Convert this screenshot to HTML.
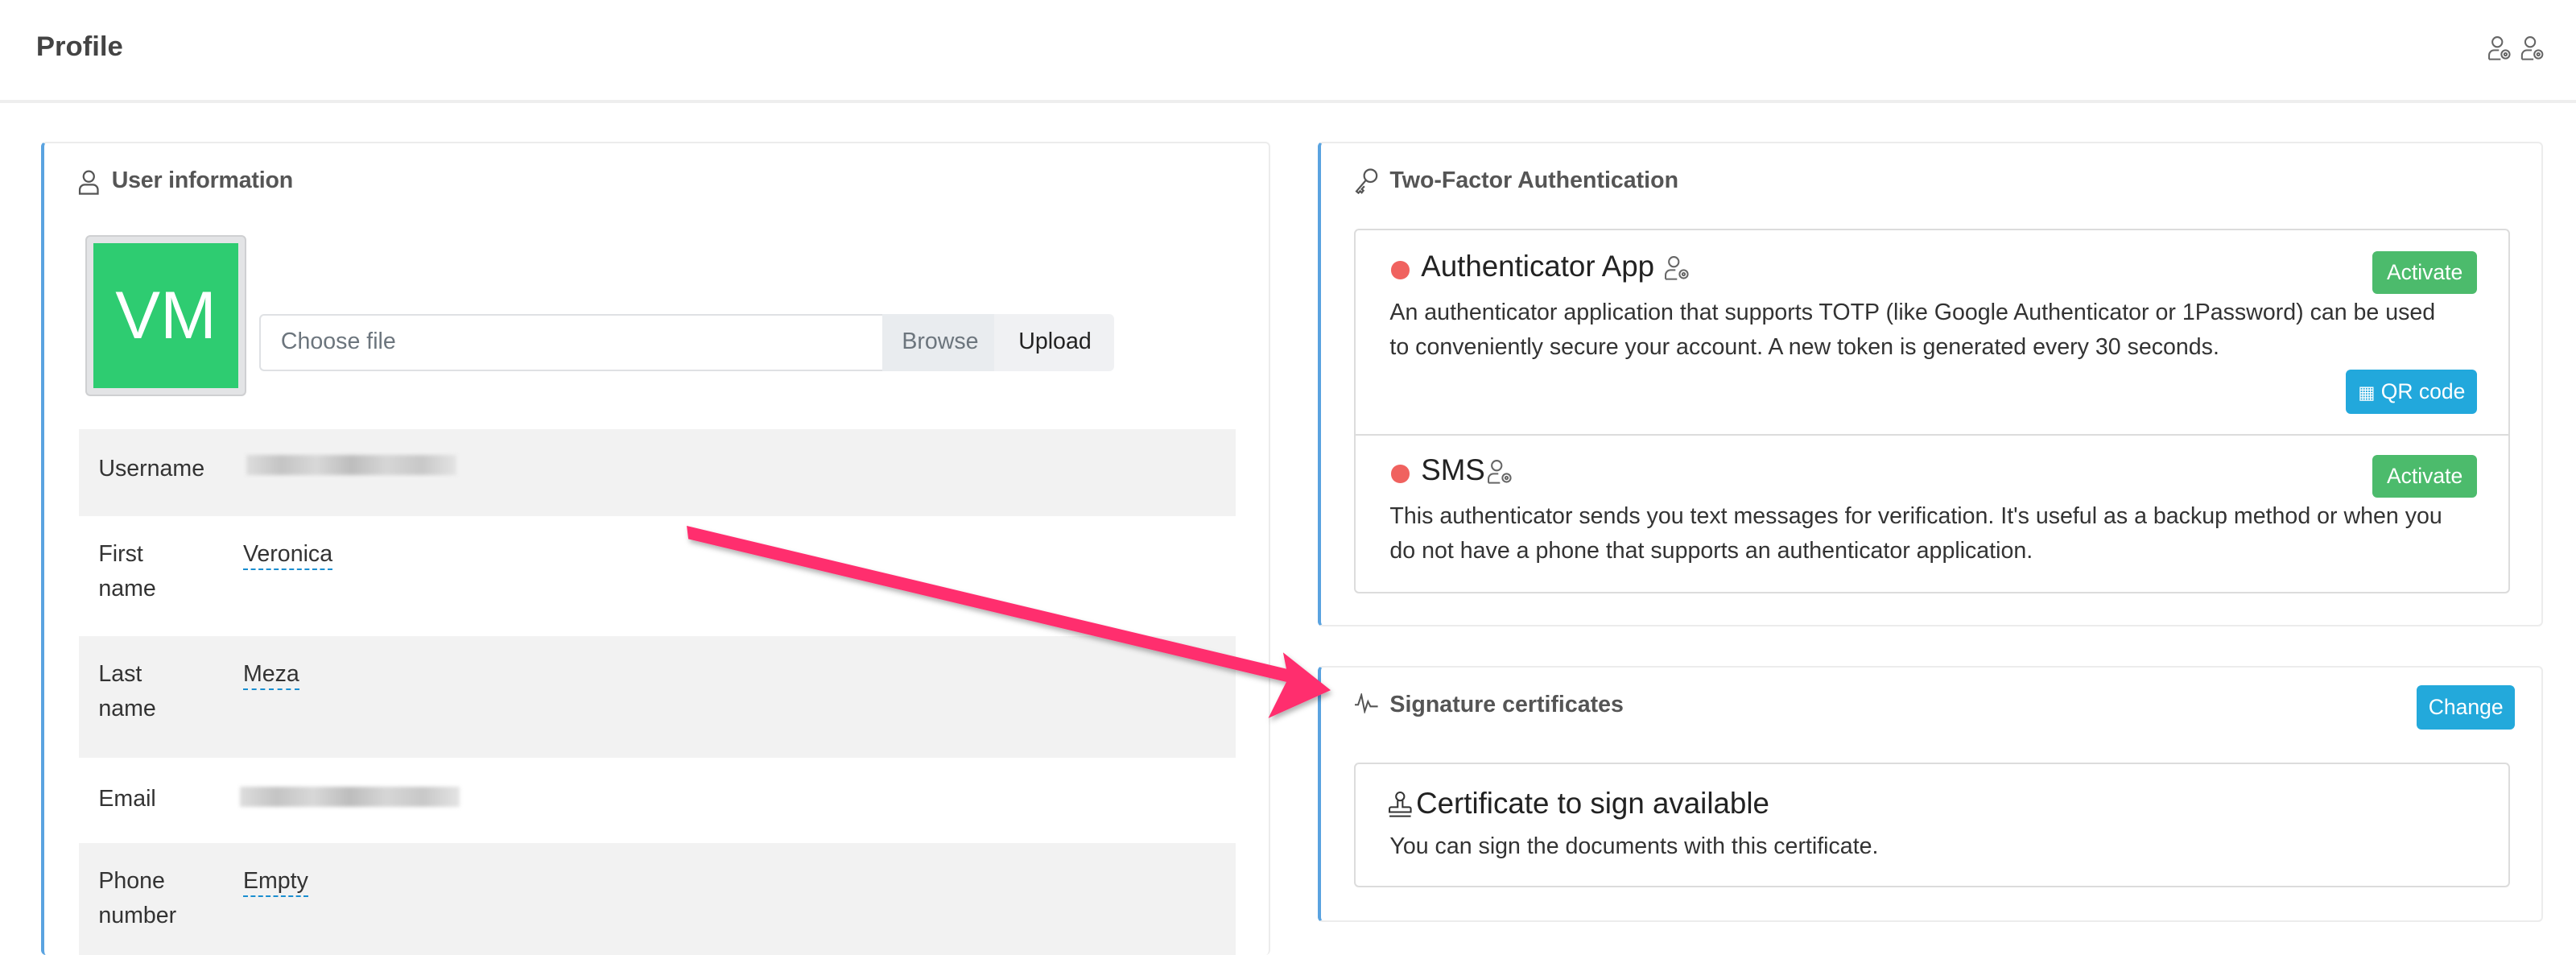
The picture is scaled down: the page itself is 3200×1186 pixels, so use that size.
<!DOCTYPE html>
<html><head><meta charset="utf-8"><style>
html,body{margin:0;padding:0;background:#fff;overflow:hidden;width:3200px;height:1186px}
#w{zoom:2.0408;width:1568px;height:581px;position:relative;font-family:"Liberation Sans",sans-serif;color:#333;overflow:hidden}
.a{position:absolute}
.t{white-space:nowrap}
.card{position:absolute;border:1px solid #ececec;border-left:2px solid #5aa3e0;border-radius:3px;background:#fff;box-sizing:border-box}
.btn{position:absolute;color:#fff;font-size:13px;border-radius:3px;text-align:center}
.lbl{position:absolute;left:12px;font-size:14px;line-height:21px;color:#333}
.val{position:absolute;left:100px;font-size:14px;color:#333;border-bottom:1px dashed #1a8ed0;line-height:17px}
.blur{position:absolute;height:12px;background:linear-gradient(90deg,#ddd,#c4c4c4,#d8d8d8,#bdbdbd,#d6d6d6,#c8c8c8,#e4e4e4);filter:blur(1.2px)}
</style></head><body><div id="w">
<div class="a" style="left:0;top:0;width:1568px;height:61px;background:#fff;border-bottom:2px solid #eee"></div>
<div class="a t" style="left:22px;top:19px;font-size:17px;font-weight:bold;color:#444">Profile</div>
<svg class="a" style="left:1514px;top:21px" width="40" height="18" viewBox="0 0 40 18" fill="none" stroke="#666" stroke-width="1">
<circle cx="6" cy="4.5" r="3"/><path d="M1 15v-2.5a3 3 0 0 1 3-3h3M1 15h7"/><circle cx="11" cy="12" r="2.5"/><circle cx="11" cy="12" r="0.8"/>
<circle cx="26" cy="4.5" r="3"/><path d="M21 15v-2.5a3 3 0 0 1 3-3h3M21 15h7"/><circle cx="31" cy="12" r="2.5"/><circle cx="31" cy="12" r="0.8"/></svg>

<div class="card" style="left:25px;top:86px;width:748px;height:495px;border-bottom:none;overflow:hidden">
<svg class="a" style="left:20px;top:16px" width="14" height="16" viewBox="0 0 14 16" fill="none" stroke="#555" stroke-width="1.1"><circle cx="7" cy="4.5" r="3.2"/><path d="M1.5 15v-2.5a3 3 0 0 1 3-3h5a3 3 0 0 1 3 3V15z"/></svg>
<div class="a t" style="left:41px;top:15px;font-size:14px;color:#555;font-weight:bold;letter-spacing:-0.1px">User information</div>
<div class="a" style="left:25px;top:56px;width:96px;height:96px;background:#e3e4e6;border:1px solid #cfd0d2;border-radius:3px"></div>
<div class="a" style="left:30px;top:61px;width:88px;height:88px;background:#2ecc71;color:#fff;font-size:41px;text-align:center;line-height:88px">VM</div>
<div class="a" style="left:131px;top:104px;width:378px;height:33px;border:1px solid #dfe1e4;border-radius:3px 0 0 3px;background:#fff"></div>
<div class="a t" style="left:144px;top:113px;font-size:14px;color:#6c757d">Choose file</div>
<div class="a" style="left:510px;top:104px;width:68px;height:35px;background:#e9ecef"></div>
<div class="a t" style="left:522px;top:113px;font-size:14px;color:#6c757d">Browse</div>
<div class="a" style="left:578px;top:104px;width:73px;height:35px;background:#f0f1f3;border-radius:0 3px 3px 0"></div>
<div class="a t" style="left:593px;top:113px;font-size:14px;color:#222">Upload</div>
<div class="a" style="left:21px;top:174px;width:704px;height:53px;background:#f2f2f2"><div class="lbl" style="top:14px">Username</div><div class="blur" style="left:102px;top:16px;width:128px"></div></div>
<div class="a" style="left:21px;top:227px;width:704px;height:73px;background:#fff"><div class="lbl" style="top:13px">First<br>name</div><div class="val" style="top:15px">Veronica</div></div>
<div class="a" style="left:21px;top:300px;width:704px;height:74px;background:#f2f2f2"><div class="lbl" style="top:13px">Last<br>name</div><div class="val" style="top:15px">Meza</div></div>
<div class="a" style="left:21px;top:374px;width:704px;height:52px;background:#fff"><div class="lbl" style="top:15px">Email</div><div class="blur" style="left:98px;top:18px;width:134px"></div></div>
<div class="a" style="left:21px;top:426px;width:704px;height:69px;background:#f2f2f2"><div class="lbl" style="top:13px">Phone<br>number</div><div class="val" style="top:15px">Empty</div></div>
</div>

<div class="card" style="left:802px;top:86px;width:746px;height:295px">
<svg class="a" style="left:20px;top:15px" width="15" height="16" viewBox="0 0 15 16" fill="none" stroke="#555" stroke-width="1.1"><circle cx="10" cy="5" r="3.8"/><path d="M7.3 7.7L1.5 14.5l1.2 1 1-1.1 1 .9 1-1.2-1-.9 1.6-1.8"/></svg>
<div class="a t" style="left:42px;top:15px;font-size:14px;color:#555;font-weight:bold">Two-Factor Authentication</div>
<div class="a" style="left:20px;top:52px;width:702px;height:220px;border:1px solid #dcdcdc;border-radius:3px"></div>
<div class="a" style="left:21px;top:177px;width:702px;height:1px;background:#dcdcdc"></div>
<div class="a" style="left:43px;top:72px;width:11px;height:11px;border-radius:50%;background:#f0625f"></div>
<div class="a t" style="left:61px;top:65px;font-size:18px;color:#222">Authenticator App</div>
<svg class="a" style="left:209px;top:68px" width="19" height="16" viewBox="0 0 19 16" fill="none" stroke="#666" stroke-width="1"><circle cx="6" cy="4.5" r="3"/><path d="M1 15v-2.5a3 3 0 0 1 3-3h3M1 15h7"/><circle cx="12" cy="12" r="2.5"/><circle cx="12" cy="12" r="0.8"/></svg>
<div class="btn" style="left:640px;top:66px;width:64px;height:26px;line-height:26px;background:#4cbb6c">Activate</div>
<div class="a" style="left:42px;top:93px;font-size:14px;line-height:21px;color:#333;width:640px">An authenticator application that supports TOTP (like Google Authenticator or 1Password) can be used to conveniently secure your account. A new token is generated every 30 seconds.</div>
<div class="btn" style="left:624px;top:138px;width:80px;height:27px;line-height:27px;background:#22a8dc"><span style="font-size:11px">▦</span> QR code</div>
<div class="a" style="left:43px;top:196px;width:11px;height:11px;border-radius:50%;background:#f0625f"></div>
<div class="a t" style="left:61px;top:189px;font-size:18px;color:#222">SMS</div>
<svg class="a" style="left:101px;top:192px" width="19" height="16" viewBox="0 0 19 16" fill="none" stroke="#666" stroke-width="1"><circle cx="6" cy="4.5" r="3"/><path d="M1 15v-2.5a3 3 0 0 1 3-3h3M1 15h7"/><circle cx="12" cy="12" r="2.5"/><circle cx="12" cy="12" r="0.8"/></svg>
<div class="btn" style="left:640px;top:190px;width:64px;height:26px;line-height:26px;background:#4cbb6c">Activate</div>
<div class="a" style="left:42px;top:217px;font-size:14px;line-height:21px;color:#333;width:645px">This authenticator sends you text messages for verification. It's useful as a backup method or when you do not have a phone that supports an authenticator application.</div>
</div>

<div class="card" style="left:802px;top:405px;width:746px;height:156px">
<svg class="a" style="left:20px;top:16px" width="15" height="12" viewBox="0 0 15 12" fill="none" stroke="#555" stroke-width="1"><path d="M0.5 7h2l2-6 2 10 2-6 1.5 3h4.5"/></svg>
<div class="a t" style="left:42px;top:15px;font-size:14px;color:#555;font-weight:bold">Signature certificates</div>
<div class="btn" style="left:667px;top:11px;width:60px;height:27px;line-height:27px;background:#23a9db">Change</div>
<div class="a" style="left:20px;top:58px;width:702px;height:74px;border:1px solid #dcdcdc;border-radius:3px"></div>
<svg class="a" style="left:41px;top:75px" width="15" height="17" viewBox="0 0 15 17" fill="none" stroke="#333" stroke-width="1"><circle cx="7.5" cy="3.5" r="2.5"/><path d="M6 6v4H2a1 1 0 0 0-1 1v2h13v-2a1 1 0 0 0-1-1H9V6M1 15.5h13"/></svg>
<div class="a t" style="left:58px;top:73px;font-size:18px;color:#222">Certificate to sign available</div>
<div class="a t" style="left:42px;top:101px;font-size:14px;color:#333">You can sign the documents with this certificate.</div>
</div>

<svg class="a" style="left:0;top:0" width="1568" height="581" viewBox="0 0 1568 581">
<defs><filter id="s" x="-10%" y="-10%" width="120%" height="140%"><feDropShadow dx="1" dy="2" stdDeviation="1.5" flood-color="#000" flood-opacity="0.3"/></filter></defs>
<polygon filter="url(#s)" fill="#ff2d6e" points="418,320 419,328 783,415 772,437 810,420 781,397 783,407"/>
</svg>
</div></body></html>
